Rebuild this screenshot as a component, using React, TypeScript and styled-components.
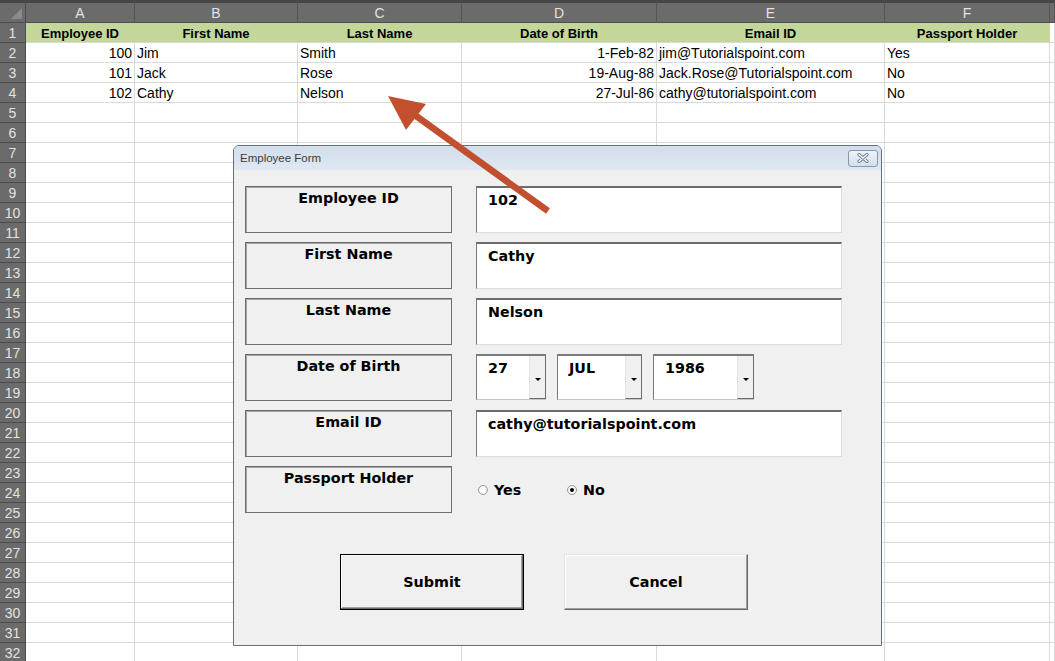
import React from 'react';
import styled, { createGlobalStyle } from 'styled-components';

const GlobalStyle = createGlobalStyle`
  html, body { margin: 0; padding: 0; background: #ffffff; }
  body { overflow: hidden; }
`;

const Page = styled.div`
  position: relative;
  width: 1055px;
  height: 661px;
  overflow: hidden;
  background: #ffffff;
`;

const Sheet = styled.div`
  display: grid;
  grid-template-columns: 26px 109px 163px 164px 195px 228px 165px 5px;
  grid-template-rows: 23px repeat(32, 20px);
  font-family: "Liberation Sans", Arial, sans-serif;
`;

const Corner = styled.div`
  box-sizing: border-box;
  background: #6b6b6b;
  border-top: 3px solid #464646;
  border-right: 1px solid #4e4e4e;
  border-bottom: 1px solid #4e4e4e;
  display: flex;
  align-items: flex-end;
  justify-content: flex-end;
  padding: 0 3px 3px 0;
`;

const CornerTriangle = styled.span`
  width: 0;
  height: 0;
  border-left: 11px solid transparent;
  border-bottom: 11px solid #8b8b8b;
`;

const ColHeader = styled.div`
  box-sizing: border-box;
  background: #6b6b6b;
  border-top: 3px solid #464646;
  border-right: 1px solid #555555;
  border-bottom: 1px solid #4e4e4e;
  color: #e2e2e2;
  font-size: 14px;
  padding-top: 1px;
  line-height: 18px;
  text-align: center;
`;

const RowHeader = styled.div`
  box-sizing: border-box;
  background: #6b6b6b;
  border-right: 1px solid #4e4e4e;
  border-bottom: 1px solid #4c4c4c;
  color: #e2e2e2;
  font-size: 14px;
  padding-top: 2px;
  line-height: 17px;
  text-align: center;
`;

const Cell = styled.div<{ $align?: 'left' | 'right' | 'center'; $head?: boolean }>`
  box-sizing: border-box;
  background: ${(p) => (p.$head ? '#c4d79b' : '#ffffff')};
  border-right: 1px solid ${(p) => (p.$head ? '#c4d79b' : '#dadada')};
  border-bottom: 1px solid #dadada;
  padding: 2px 2px 0;
  color: #000000;
  font-size: ${(p) => (p.$head ? '13px' : '14px')};
  font-weight: ${(p) => (p.$head ? 700 : 400)};
  line-height: 17px;
  text-align: ${(p) => p.$align ?? 'left'};
  white-space: nowrap;
  overflow: hidden;
`;

const Dialog = styled.div`
  position: absolute;
  left: 233px;
  top: 145px;
  width: 649px;
  height: 501px;
  box-sizing: border-box;
  border: 1px solid #66707c;
  border-radius: 6px 6px 0 0;
  background: #f0f0f0;
  display: flex;
  flex-direction: column;
  overflow: hidden;
  font-family: "DejaVu Sans", Verdana, sans-serif;
`;

const TitleBar = styled.div`
  flex: none;
  height: 24px;
  display: flex;
  align-items: center;
  justify-content: space-between;
  padding: 0 3px 0 6px;
  background: linear-gradient(#d2deeb, #dfe8f2);
`;

const Title = styled.span`
  font-family: "Liberation Sans", Arial, sans-serif;
  font-size: 11.5px;
  color: #3a3a3a;
`;

const CloseButton = styled.div`
  box-sizing: border-box;
  width: 30px;
  height: 17px;
  border: 1px solid #8597ac;
  border-radius: 3px;
  background: linear-gradient(#eef3f9, #d3dfec);
  display: flex;
  align-items: center;
  justify-content: center;
`;

const Body = styled.div`
  flex: 1;
  padding: 16px 0 0 11px;
`;

const FormGrid = styled.div`
  display: grid;
  grid-template-columns: 207px 366px;
  grid-auto-rows: 47px;
  column-gap: 24px;
  row-gap: 9px;
`;

const FieldLabel = styled.div`
  box-sizing: border-box;
  border: 1px solid #6e6e6e;
  box-shadow: inset 1px 1px 0 #a4a4a4;
  padding-top: 3px;
  text-align: center;
  font-weight: 700;
  font-size: 14.3px;
  line-height: 16px;
  color: #000000;
`;

const TextBox = styled.div`
  box-sizing: border-box;
  background: #ffffff;
  border-top: 2px solid #6c6c6c;
  border-left: 1px solid #7a7a7a;
  border-right: 1px solid #dcdcdc;
  border-bottom: 1px solid #dcdcdc;
  padding: 4px 0 0 11px;
  font-weight: 700;
  font-size: 14.3px;
  line-height: 16px;
  color: #000000;
`;

const ComboRow = styled.div`
  display: flex;
  gap: 11px;
  height: 46px;
`;

const Combo = styled.div<{ $w: number }>`
  box-sizing: border-box;
  width: ${(p) => p.$w}px;
  display: flex;
  background: #ffffff;
  border-top: 2px solid #7a7a7a;
  border-left: 1px solid #7a7a7a;
  border-bottom: 1px solid #c6c6c6;
`;

const ComboValue = styled.div`
  flex: 1;
  padding: 4px 0 0 11px;
  font-weight: 700;
  font-size: 14.3px;
  line-height: 16px;
  color: #000000;
`;

const ComboButton = styled.div`
  box-sizing: border-box;
  flex: none;
  width: 17px;
  background: #f0f0f0;
  border-left: 1px solid #e2e2e2;
  border-right: 1px solid #6c6c6c;
  border-bottom: 1px solid #6c6c6c;
  display: flex;
  align-items: center;
  justify-content: center;
  padding-top: 4px;
`;

const ComboArrow = styled.span`
  width: 0;
  height: 0;
  border-left: 3px solid transparent;
  border-right: 3px solid transparent;
  border-top: 3px solid #000000;
`;

const RadioGroup = styled.div`
  display: grid;
  grid-template-columns: 89px auto;
  align-items: center;
  padding-left: 2px;
`;

const RadioOption = styled.label`
  display: flex;
  align-items: center;
  gap: 6px;
  font-weight: 700;
  font-size: 14.3px;
  line-height: 16px;
  color: #000000;
`;

const RadioDot = styled.span<{ $checked?: boolean }>`
  box-sizing: border-box;
  width: 10px;
  height: 10px;
  border-radius: 50%;
  border: 1px solid #9a9a9a;
  background: radial-gradient(circle at 50% 50%, #ffffff 40%, #e4e4e4 100%);
  display: flex;
  align-items: center;
  justify-content: center;
  &::after {
    content: '';
    width: 4px;
    height: 4px;
    border-radius: 50%;
    background: ${(p) => (p.$checked ? '#000000' : 'transparent')};
  }
`;

const ButtonRow = styled.div`
  display: flex;
  gap: 40px;
  margin-top: 41px;
  padding-left: 95px;
`;

const PushButton = styled.div<{ $default?: boolean }>`
  box-sizing: border-box;
  width: 184px;
  height: 56px;
  display: flex;
  align-items: center;
  justify-content: center;
  background: #f0f0f0;
  font-weight: 700;
  font-size: 14.3px;
  color: #000000;
  border: 1px solid ${(p) => (p.$default ? '#000000' : '#e3e3e3')};
  border-right-color: ${(p) => (p.$default ? '#000000' : '#696969')};
  border-bottom-color: ${(p) => (p.$default ? '#000000' : '#696969')};
  box-shadow: ${(p) =>
    p.$default
      ? 'inset -1px -1px 0 #696969, inset 1px 1px 0 #ffffff, inset -2px -2px 0 #a0a0a0'
      : 'inset -1px -1px 0 #a0a0a0, inset 1px 1px 0 #ffffff'};
`;

const ArrowLayer = styled.svg`
  position: absolute;
  left: 0;
  top: 0;
  pointer-events: none;
`;

const columns = ['A', 'B', 'C', 'D', 'E', 'F'];
const headers = ['Employee ID', 'First Name', 'Last Name', 'Date of Birth', 'Email ID', 'Passport Holder'];
const aligns: Array<'left' | 'right'> = ['right', 'left', 'left', 'right', 'left', 'left'];
const data = [
  ['100', 'Jim', 'Smith', '1-Feb-82', 'jim@Tutorialspoint.com', 'Yes'],
  ['101', 'Jack', 'Rose', '19-Aug-88', 'Jack.Rose@Tutorialspoint.com', 'No'],
  ['102', 'Cathy', 'Nelson', '27-Jul-86', 'cathy@tutorialspoint.com', 'No'],
];

const TOTAL_ROWS = 32;

function SheetGrid() {
  const cells: React.ReactNode[] = [];
  cells.push(
    <Corner key="corner">
      <CornerTriangle />
    </Corner>
  );
  columns.forEach((c) => cells.push(<ColHeader key={`h-${c}`}>{c}</ColHeader>));
  cells.push(<ColHeader key="h-G" />);
  for (let r = 1; r <= TOTAL_ROWS; r++) {
    cells.push(<RowHeader key={`r-${r}`}>{r}</RowHeader>);
    for (let c = 0; c < 6; c++) {
      if (r === 1) {
        cells.push(
          <Cell key={`c-${r}-${c}`} $head $align="center">
            {headers[c]}
          </Cell>
        );
      } else {
        const row = data[r - 2];
        cells.push(
          <Cell key={`c-${r}-${c}`} $align={aligns[c]}>
            {row ? row[c] : ''}
          </Cell>
        );
      }
    }
    cells.push(<Cell key={`c-${r}-G`} />);
  }
  return <Sheet>{cells}</Sheet>;
}

function CloseGlyph() {
  return (
    <svg width="12" height="10" viewBox="0 0 12 10">
      <path d="M2 1.5 L10 8.5 M10 1.5 L2 8.5" stroke="#6f7d90" strokeWidth="3.2" strokeLinecap="round" />
      <path d="M2 1.5 L10 8.5 M10 1.5 L2 8.5" stroke="#ffffff" strokeWidth="1.3" strokeLinecap="round" />
    </svg>
  );
}

export default function App() {
  return (
    <Page>
      <GlobalStyle />
      <SheetGrid />
      <Dialog>
        <TitleBar>
          <Title>Employee Form</Title>
          <CloseButton>
            <CloseGlyph />
          </CloseButton>
        </TitleBar>
        <Body>
          <FormGrid>
            <FieldLabel>Employee ID</FieldLabel>
            <TextBox>102</TextBox>
            <FieldLabel>First Name</FieldLabel>
            <TextBox>Cathy</TextBox>
            <FieldLabel>Last Name</FieldLabel>
            <TextBox>Nelson</TextBox>
            <FieldLabel>Date of Birth</FieldLabel>
            <ComboRow>
              <Combo $w={70}>
                <ComboValue>27</ComboValue>
                <ComboButton>
                  <ComboArrow />
                </ComboButton>
              </Combo>
              <Combo $w={85}>
                <ComboValue>JUL</ComboValue>
                <ComboButton>
                  <ComboArrow />
                </ComboButton>
              </Combo>
              <Combo $w={101}>
                <ComboValue>1986</ComboValue>
                <ComboButton>
                  <ComboArrow />
                </ComboButton>
              </Combo>
            </ComboRow>
            <FieldLabel>Email ID</FieldLabel>
            <TextBox>cathy@tutorialspoint.com</TextBox>
            <FieldLabel>Passport Holder</FieldLabel>
            <RadioGroup>
              <RadioOption>
                <RadioDot />
                Yes
              </RadioOption>
              <RadioOption>
                <RadioDot $checked />
                No
              </RadioOption>
            </RadioGroup>
          </FormGrid>
          <ButtonRow>
            <PushButton $default>Submit</PushButton>
            <PushButton>Cancel</PushButton>
          </ButtonRow>
        </Body>
      </Dialog>
      <ArrowLayer width="1055" height="661" viewBox="0 0 1055 661">
        <line x1="548" y1="211" x2="405" y2="108" stroke="#c2502f" strokeWidth="6.5" />
        <polygon points="388,96 426,104 406,130" fill="#c2502f" />
      </ArrowLayer>
    </Page>
  );
}
